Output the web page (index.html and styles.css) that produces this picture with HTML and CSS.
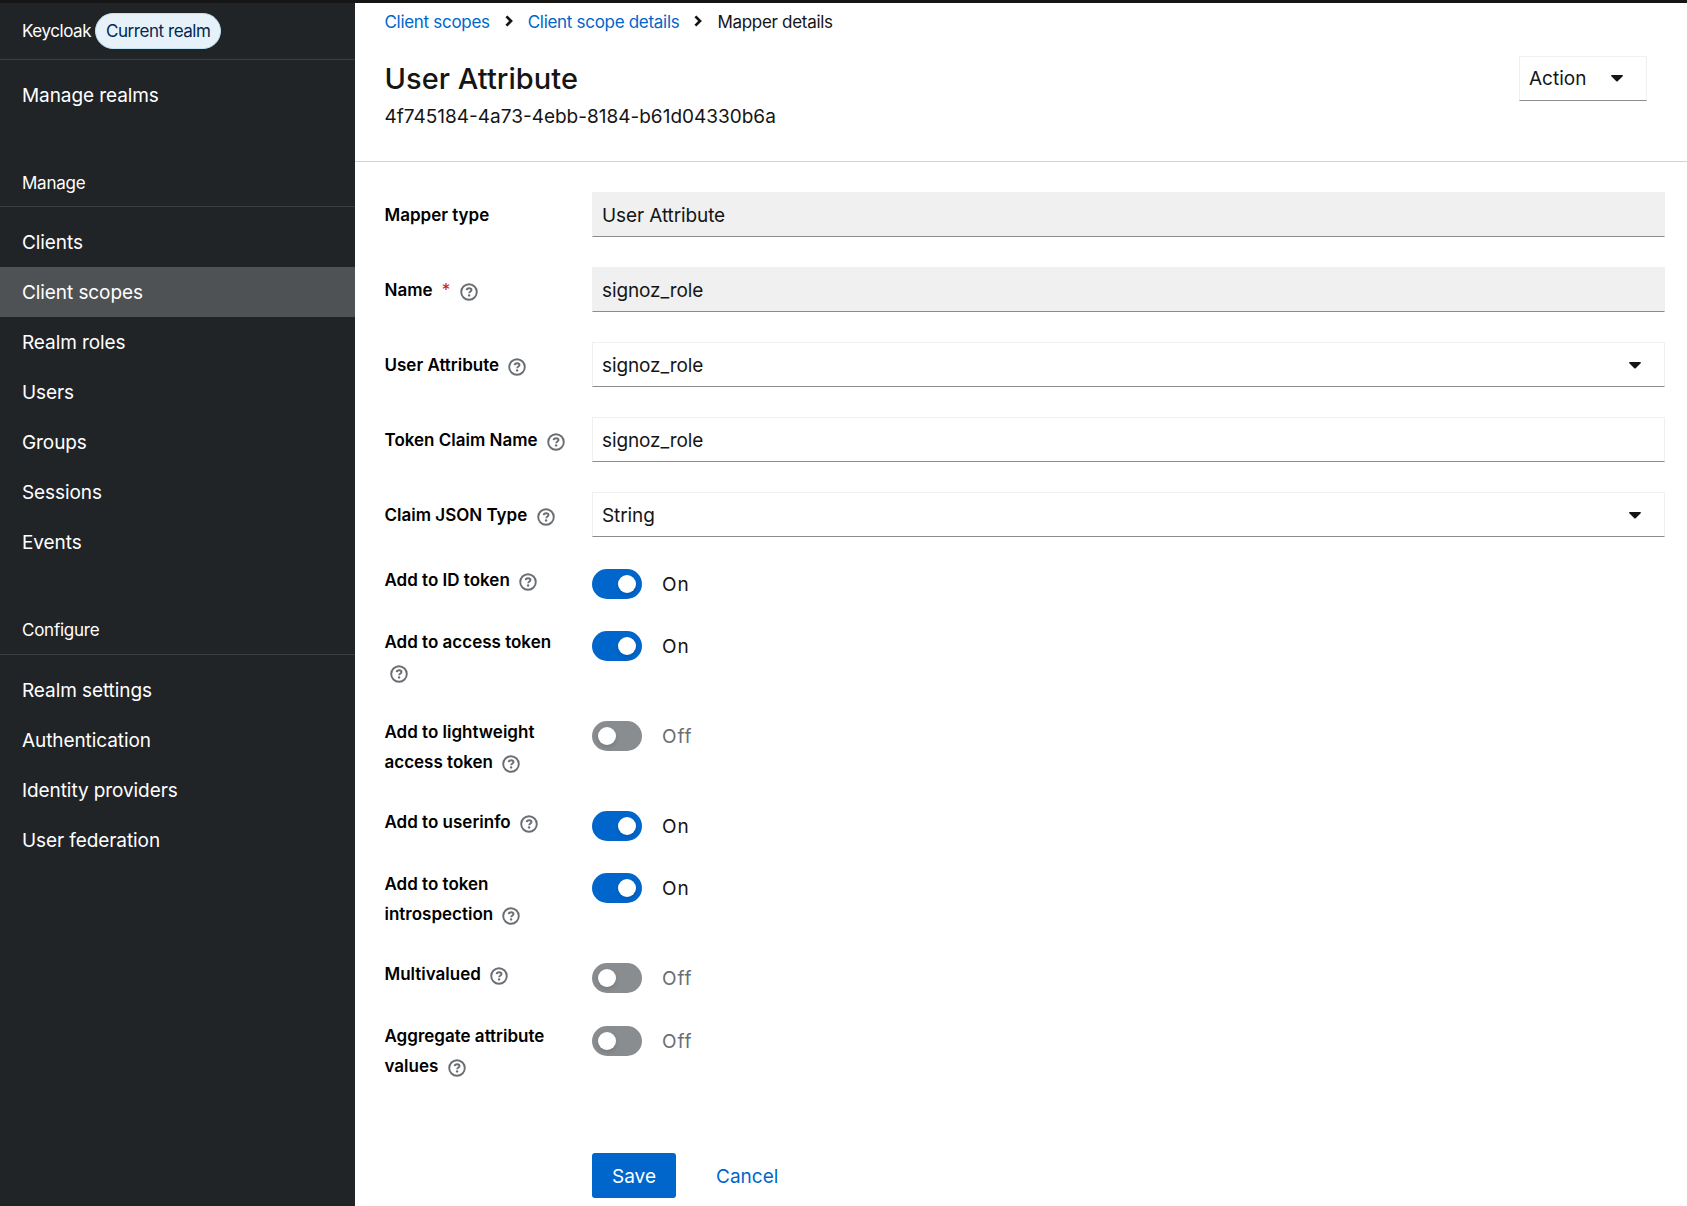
FILE: index.html
```html
<!DOCTYPE html>
<html lang="en">
<head>
    <meta charset="UTF-8">
    <meta name="viewport" content="width=device-width, initial-scale=1.0">
    <title>Mapper details</title>
    <link rel="stylesheet" href="styles.css">
</head>
<body>
    <!-- Shared icons -->
    <svg class="icon-defs" width="0" height="0">
        <symbol id="icon-help" viewBox="0 0 18 18">
            <circle cx="9" cy="9" r="7.8" fill="none" stroke="currentColor" stroke-width="1.9"/>
            <path d="M6.6 7.2C6.8 5.9 7.7 5.2 9.1 5.2C10.5 5.2 11.5 6 11.5 7.1C11.5 8.6 9.2 8.6 9.2 10.3" fill="none" stroke="currentColor" stroke-width="1.9"/>
            <circle cx="9.1" cy="12.4" r="1.2" fill="currentColor"/>
        </symbol>
        <symbol id="icon-caret" viewBox="0 0 12 7">
            <path d="M0.8 0H11.2C11.9 0 12.2 0.7 11.7 1.2L6.7 6.2C6.3 6.6 5.7 6.6 5.3 6.2L0.3 1.2C-0.2 0.7 0.1 0 0.8 0Z" fill="currentColor"/>
        </symbol>
        <symbol id="icon-chevron" viewBox="0 0 8 12">
            <path d="M1.4 1.4L6 6L1.4 10.6" fill="none" stroke="currentColor" stroke-width="2.7"/>
        </symbol>
    </svg>

    <div class="page">
        <aside class="sidebar">
            <div class="realm">
                <span class="realm-name">Keycloak</span>
                <span class="realm-label">Current realm</span>
            </div>
            <nav>
                <ul class="nav-list">
                    <li><a href="#">Manage realms</a></li>
                </ul>
                <h2 class="nav-title">Manage</h2>
                <ul class="nav-list">
                    <li><a href="#">Clients</a></li>
                    <li><a href="#" class="active">Client scopes</a></li>
                    <li><a href="#">Realm roles</a></li>
                    <li><a href="#">Users</a></li>
                    <li><a href="#">Groups</a></li>
                    <li><a href="#">Sessions</a></li>
                    <li><a href="#">Events</a></li>
                </ul>
                <h2 class="nav-title configure">Configure</h2>
                <ul class="nav-list">
                    <li><a href="#">Realm settings</a></li>
                    <li><a href="#">Authentication</a></li>
                    <li><a href="#">Identity providers</a></li>
                    <li><a href="#">User federation</a></li>
                </ul>
            </nav>
        </aside>

        <main>
            <header class="page-header">
                <div class="breadcrumb">
                    <a href="#">Client scopes</a>
                    <svg class="chevron"><use href="#icon-chevron"/></svg>
                    <a href="#">Client scope details</a>
                    <svg class="chevron"><use href="#icon-chevron"/></svg>
                    <span>Mapper details</span>
                </div>
                <div class="title-row">
                    <div>
                        <h1>User Attribute</h1>
                        <p class="mapper-id">4f745184-4a73-4ebb-8184-b61d04330b6a</p>
                    </div>
                    <button type="button" class="action-toggle">Action <svg class="caret"><use href="#icon-caret"/></svg></button>
                </div>
            </header>

            <form class="mapper-form">
                <div class="field">
                    <label for="mapper-type">Mapper type</label>
                    <input id="mapper-type" class="control" type="text" value="User Attribute" readonly>
                </div>
                <div class="field">
                    <label for="name">Name <span class="required">*</span> <svg class="help"><use href="#icon-help"/></svg></label>
                    <input id="name" class="control" type="text" value="signoz_role" readonly>
                </div>
                <div class="field">
                    <label>User Attribute <svg class="help"><use href="#icon-help"/></svg></label>
                    <button type="button" class="control select">signoz_role <svg class="caret"><use href="#icon-caret"/></svg></button>
                </div>
                <div class="field">
                    <label for="claim-name">Token Claim Name <svg class="help"><use href="#icon-help"/></svg></label>
                    <input id="claim-name" class="control" type="text" value="signoz_role">
                </div>
                <div class="field">
                    <label>Claim JSON Type <svg class="help"><use href="#icon-help"/></svg></label>
                    <button type="button" class="control select">String <svg class="caret"><use href="#icon-caret"/></svg></button>
                </div>

                <div class="field toggle-field">
                    <label>Add to ID token <svg class="help"><use href="#icon-help"/></svg></label>
                    <div class="switch on"><span class="track"></span>On</div>
                </div>
                <div class="field toggle-field">
                    <label>Add to access token <svg class="help"><use href="#icon-help"/></svg></label>
                    <div class="switch on"><span class="track"></span>On</div>
                </div>
                <div class="field toggle-field">
                    <label>Add to lightweight access token <svg class="help"><use href="#icon-help"/></svg></label>
                    <div class="switch"><span class="track"></span>Off</div>
                </div>
                <div class="field toggle-field">
                    <label>Add to userinfo <svg class="help"><use href="#icon-help"/></svg></label>
                    <div class="switch on"><span class="track"></span>On</div>
                </div>
                <div class="field toggle-field">
                    <label>Add to token introspection <svg class="help"><use href="#icon-help"/></svg></label>
                    <div class="switch on"><span class="track"></span>On</div>
                </div>
                <div class="field toggle-field">
                    <label>Multivalued <svg class="help"><use href="#icon-help"/></svg></label>
                    <div class="switch"><span class="track"></span>Off</div>
                </div>
                <div class="field toggle-field last">
                    <label>Aggregate attribute values <svg class="help"><use href="#icon-help"/></svg></label>
                    <div class="switch"><span class="track"></span>Off</div>
                </div>

                <div class="form-actions">
                    <button type="submit" class="btn-save">Save</button>
                    <button type="button" class="btn-cancel">Cancel</button>
                </div>
            </form>
        </main>
    </div>
</body>
</html>
```
FILE: styles.css
```css
/* Global Styles */
* {
    margin: 0;
    padding: 0;
    box-sizing: border-box;
}

body {
    font-family: "Inter", "Liberation Sans", sans-serif;
    font-size: 19px;
    line-height: 30px;
    color: #151515;
    background-color: #fff;
    overflow: hidden;
}

a {
    color: #0066cc;
    text-decoration: none;
}

button,
input {
    font: inherit;
    letter-spacing: inherit;
    color: inherit;
}

.icon-defs {
    display: block;
}

.page {
    display: grid;
    grid-template-columns: 355px 1fr;
    height: 100vh;
    border-top: 3px solid #151515;
}

/* Sidebar */
.sidebar {
    background-color: #212427;
    color: #fff;
}

.realm {
    display: flex;
    align-items: center;
    gap: 4px;
    height: 57px;
    padding: 0 0 1px 22px;
    border-bottom: 1px solid #3c3f42;
    font-size: 17px;
    letter-spacing: -0.45px;
}

.realm-label {
    height: 36px;
    padding: 0 10px;
    line-height: 34px;
    border: 1px solid #bee1f4;
    border-radius: 18px;
    background-color: #e7f1fa;
    color: #002952;
}

.nav-list {
    list-style: none;
    padding-top: 10px;
    letter-spacing: -0.08px;
}

.nav-list a {
    display: block;
    height: 50px;
    padding-left: 22px;
    line-height: 51px;
    color: #fff;
}

.nav-list a.active {
    background-color: #4f5255;
}

.nav-title {
    height: 87px;
    padding: 48px 0 0 22px;
    border-bottom: 1px solid #3c3f42;
    font-size: 17px;
    font-weight: 400;
    letter-spacing: -0.25px;
}

.nav-title.configure {
    height: 88px;
}

/* Page header */
.page-header {
    height: 159px;
    padding: 4px 40px 0 29.5px;
    border-bottom: 1px solid #d2d2d2;
}

.breadcrumb {
    display: flex;
    align-items: center;
    font-size: 17px;
    letter-spacing: -0.3px;
}

.breadcrumb .chevron {
    width: 8px;
    height: 12px;
    margin: -2px 15px 0;
}

.title-row {
    display: flex;
    justify-content: space-between;
    margin-top: 19px;
}

.title-row h1 {
    margin-top: 3px;
    font-size: 29px;
    font-weight: 500;
    line-height: 39px;
    letter-spacing: 0.05px;
}

.mapper-id {
    margin-top: 4px;
}

.action-toggle {
    display: flex;
    align-items: center;
    justify-content: space-between;
    width: 128px;
    height: 45px;
    padding: 0 23px 0 9px;
    border: 1px solid #f0f0f0;
    border-bottom-color: #8a8d90;
    background-color: #fff;
}

.caret {
    width: 12px;
    height: 7px;
}

/* Mapper form */
.mapper-form {
    display: flex;
    flex-direction: column;
    gap: 30px;
    padding: 30px 22px 0 29.5px;
}

.field {
    display: grid;
    grid-template-columns: 187.5px 1fr;
    column-gap: 20px;
}

.field label {
    padding-top: 8px;
    font-size: 17px;
    font-weight: 600;
    color: #000;
}

.required {
    margin-left: 5px;
    color: #c9190b;
    font-weight: 400;
}

.help {
    width: 18px;
    height: 18px;
    margin: 0 5px;
    vertical-align: -5px;
    color: #6a6e73;
}

.control {
    width: 100%;
    height: 45px;
    padding: 2px 9px 0;
    border: 1px solid #f0f0f0;
    border-bottom-color: #8a8d90;
    background-color: #fff;
    letter-spacing: -0.1px;
}

.control[readonly] {
    background-color: #f0f0f0;
}

.select {
    display: flex;
    align-items: center;
    justify-content: space-between;
    padding-right: 23px;
}

.toggle-field {
    min-height: 32px;
}

.toggle-field label {
    padding-top: 0;
    margin-top: -2px;
    margin-bottom: 2px;
}

/* Switches */
.switch {
    display: flex;
    gap: 20px;
    height: 30px;
    margin-top: 2px;
    line-height: 32px;
    letter-spacing: 0.9px;
    color: #6a6e73;
}

.switch.on {
    color: #151515;
}

.last .switch {
    margin-top: 3px;
}

.track {
    display: flex;
    align-items: center;
    width: 50px;
    padding: 0 6px;
    border-radius: 15px;
    background-color: #8a8d90;
}

.track::before {
    content: "";
    width: 18px;
    height: 18px;
    border-radius: 50%;
    background-color: #fff;
    box-shadow: 0 2px 4px rgba(3, 3, 3, 0.15);
}

.on .track {
    justify-content: flex-end;
    background-color: #0066cc;
}

/* Form buttons */
.form-actions {
    display: flex;
    gap: 20px;
    margin: 40px 0 0 207.5px;
}

.form-actions button {
    height: 45px;
    padding-top: 2px;
    border: none;
    border-radius: 3px;
}

.btn-save {
    width: 84px;
    background-color: #0066cc;
    color: #fff;
}

.form-actions .btn-cancel {
    padding: 2px 20px 0;
    background-color: transparent;
    color: #0066cc;
}
```
